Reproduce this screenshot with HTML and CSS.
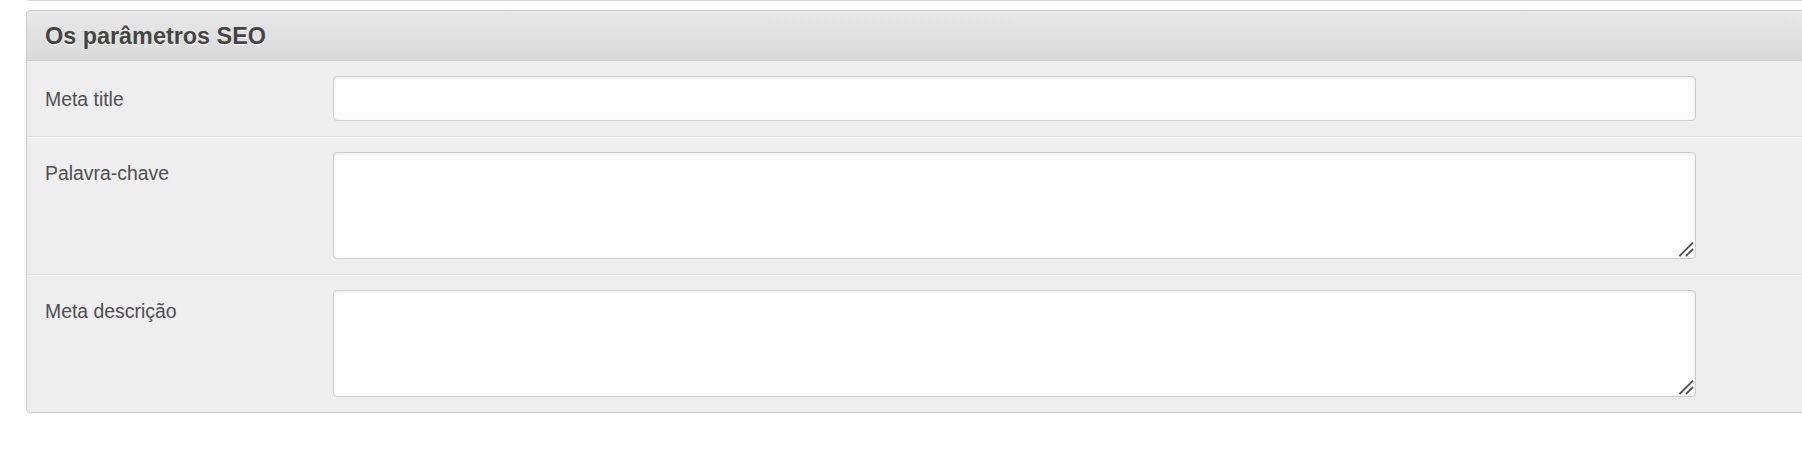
FILE: index.html
```html
<!DOCTYPE html>
<html lang="pt">
<head>
<meta charset="utf-8">
<title>Os parâmetros SEO</title>
<link rel="stylesheet" href="styles.css">
</head>
<body>
<div class="page">
  <div class="panel panel-prev"></div>
  <div class="panel">
    <div class="panel-heading">Os parâmetros SEO</div>
    <div class="form-row">
      <label class="control-label control-label-center" for="meta-title">Meta title</label>
      <div class="control">
        <input class="input" id="meta-title" type="text">
      </div>
    </div>
    <div class="form-row">
      <label class="control-label" for="keywords">Palavra-chave</label>
      <div class="control">
        <textarea class="input textarea" id="keywords"></textarea>
        <svg class="grip" width="15" height="15" viewBox="0 0 15 15" aria-hidden="true">
          <line x1="0.5" y1="14" x2="14" y2="0.5"/>
          <line x1="7" y1="14" x2="14" y2="7"/>
        </svg>
      </div>
    </div>
    <div class="form-row">
      <label class="control-label" for="meta-desc">Meta descrição</label>
      <div class="control">
        <textarea class="input textarea" id="meta-desc"></textarea>
        <svg class="grip" width="15" height="15" viewBox="0 0 15 15" aria-hidden="true">
          <line x1="0.5" y1="14" x2="14" y2="0.5"/>
          <line x1="7" y1="14" x2="14" y2="7"/>
        </svg>
      </div>
    </div>
  </div>
</div>
</body>
</html>
```

FILE: styles.css
```css
html, body {
  margin: 0;
  padding: 0;
  background: #ffffff;
  overflow: hidden;
}

body {
  font-family: "Liberation Sans", Arial, Helvetica, sans-serif;
  color: #555555;
}

.page {
  padding-left: 26px;
  overflow: hidden;
}

.panel {
  background: #eeeeee;
  border: 1px solid #cccccc;
  border-radius: 4px;
  margin-right: -30px;
}

.panel-prev {
  height: 10px;
  margin-top: -10px;
  margin-bottom: 9px;
  border-top: 0;
  background: #ffffff;
  border-color: #d2d2d2;
  border-radius: 0 0 4px 4px;
}

.panel-heading {
  padding: 12px 18px 11px;
  font-size: 23.4px;
  line-height: 26px;
  font-weight: bold;
  color: #444444;
  text-shadow: 0 1px 0 #ffffff;
  background: linear-gradient(to bottom, #e8e8e8, #dadada);
  border-bottom: 1px solid #cccccc;
  border-radius: 4px 4px 0 0;
}

.form-row {
  display: flex;
  align-items: flex-start;
  padding: 15px 0;
}

.form-row + .form-row {
  border-top: 1px solid #dddddd;
  box-shadow: inset 0 1px 0 #f8f8f8;
}

.control-label {
  flex: 0 0 288px;
  padding: 10px 0 0 18px;
  font-size: 19.4px;
  line-height: 22px;
  color: #4f4f4f;
}

.control-label-center {
  align-self: center;
  padding-top: 0;
}

.control {
  position: relative;
  flex: 0 0 1363px;
}

.input {
  display: block;
  box-sizing: border-box;
  width: 1363px;
  margin: 0;
  padding: 8px 10px;
  font-family: "Liberation Sans", Arial, sans-serif;
  font-size: 18px;
  color: #555555;
  background: #fcfcfc;
  border: 1px solid #cccccc;
  border-radius: 4px;
  box-shadow: inset 0 1px 3px rgba(0, 0, 0, 0.08);
  outline: none;
}

input.input {
  height: 45px;
}

.textarea {
  height: 107px;
  resize: none;
}

.grip {
  position: absolute;
  right: 2px;
  bottom: 2px;
  stroke: #505050;
  stroke-width: 1.8;
  pointer-events: none;
}
```
